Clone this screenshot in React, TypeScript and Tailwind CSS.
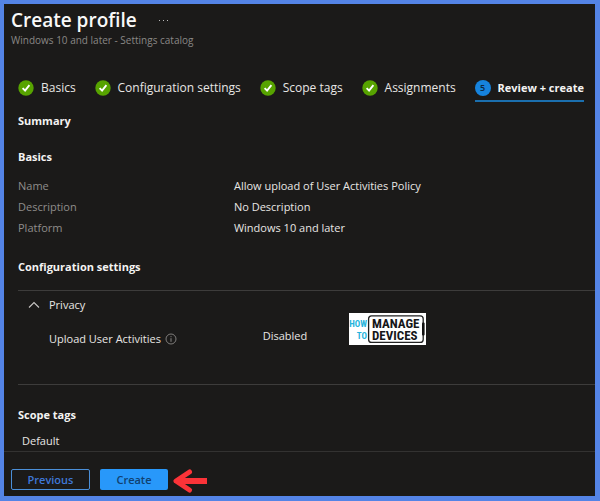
import { useState } from "react";
import type { ReactNode } from "react";

const steps = ["Basics", "Configuration settings", "Scope tags", "Assignments"];

const basics = [
  { label: "Name", value: "Allow upload of User Activities Policy" },
  { label: "Description", value: "No Description" },
  { label: "Platform", value: "Windows 10 and later" },
];

function CheckCircle() {
  return (
    <svg viewBox="0 0 16 16" className="size-4 shrink-0" aria-hidden="true">
      <circle cx="8" cy="8" r="7.7" fill="#57a300" />
      <path d="M4.6 8.1 7.1 10.6 11.4 5.2" fill="none" stroke="#fff" strokeWidth="1.9" />
    </svg>
  );
}

function InfoIcon() {
  return (
    <svg viewBox="0 0 12 12" className="size-3" aria-hidden="true">
      <circle cx="6" cy="6" r="5" fill="none" stroke="#8a8886" strokeWidth="0.9" />
      <path d="M6 5.2V8.8M6 3.2V4.2" stroke="#8a8886" strokeWidth="1" />
    </svg>
  );
}

function ArrowLeft() {
  return (
    <svg viewBox="0 0 36 24" className="h-6 w-9" aria-hidden="true">
      <path d="M35 12H6" stroke="#fb3338" strokeWidth="6" />
      <path d="M17.5 3 4 12 17.5 21" fill="none" stroke="#fb3338" strokeWidth="5" strokeLinecap="round" strokeLinejoin="round" />
    </svg>
  );
}

function Logo() {
  return (
    <svg viewBox="0 0 77 32" className="mb-0.5 h-8 w-[77px]" role="img" aria-label="How to manage devices">
      <rect width="77" height="32" fill="#fff" />
      <g fontFamily="'Roboto Condensed', Roboto, sans-serif" fontWeight="700">
        <g fill="#25b4dc" fontSize="9" textAnchor="end">
          <text x="18" y="14">HOW</text>
          <text x="18" y="26">TO</text>
        </g>
        <g fill="#16171a" fontSize="13">
          <text x="23" y="15">MANAGE</text>
          <text x="23" y="27">DEVICES</text>
        </g>
      </g>
      <rect x="19.6" y="2.8" width="54.6" height="26.6" rx="3" fill="none" stroke="#222" strokeWidth="1.3" />
      <rect x="73" y="9.5" width="2.6" height="13" rx="1" fill="#111" />
    </svg>
  );
}

function Heading({ children }: { children: ReactNode }) {
  return <h2 className="leading-4 font-bold text-[#f4f3f2]">{children}</h2>;
}

export default function App() {
  const [open, setOpen] = useState(true);

  return (
    <div className="flex min-h-screen flex-col border-4 border-r-5 border-b-5 border-[#5484e6] bg-[#1b1a19] font-['Open_Sans','Noto_Sans',sans-serif] text-[11px] leading-4 text-[#e8e6e4]">
      <header className="px-[7px] pt-1">
        <div className="flex items-center gap-[18px]">
          <h1 className="text-[19px] leading-6 font-semibold text-[#f8f8f8]">Create profile</h1>
          <button type="button" aria-label="More actions" className="flex gap-[3px] p-1">
            <span className="size-px bg-[#bbb]" />
            <span className="size-px bg-[#bbb]" />
            <span className="size-px bg-[#bbb]" />
          </button>
        </div>
        <p className="text-[10px] leading-4 text-[#8a8886]">Windows 10 and later - Settings catalog</p>
      </header>

      <main className="flex-1 px-3.5 pt-[25px]">
        <nav aria-label="Wizard steps" className="-mr-[3px]">
          <ol className="flex items-start justify-between">
            {steps.map((step) => (
              <li key={step}>
                <button type="button" className="flex h-[29px] items-center gap-[7px] border-b-2 border-transparent pt-0.5 text-xs whitespace-nowrap">
                  <CheckCircle />
                  {step}
                </button>
              </li>
            ))}
            <li>
              <button
                type="button"
                aria-current="step"
                className="flex h-[29px] items-center gap-[7px] border-b-2 border-[#1b6fae] pt-0.5 font-bold whitespace-nowrap text-[#f4f3f2]"
              >
                <span className="flex size-4 items-center justify-center rounded-full bg-[#1683dd] text-[9px] leading-3 font-semibold text-[#0c2740]">5</span>
                Review + create
              </button>
            </li>
          </ol>
        </nav>

        <div className="pt-[11px]">
          <Heading>Summary</Heading>
        </div>

        <section className="pt-5">
          <Heading>Basics</Heading>
          <table className="mt-2.5 w-full">
            <tbody>
              {basics.map((row) => (
                <tr key={row.label} className="h-[21px]">
                  <th scope="row" className="w-[38%] p-0 text-left font-normal text-[#8f8d8b]">{row.label}</th>
                  <td className="p-0 pl-0.5">{row.value}</td>
                </tr>
              ))}
            </tbody>
          </table>
        </section>

        <section className="pt-[21px]">
          <Heading>Configuration settings</Heading>
          <div className="-mr-3.5 mt-[15px] h-[95px] border-y border-[#3d3c3b] pt-1.5">
            <button type="button" aria-expanded={open} onClick={() => setOpen(!open)} className="flex items-center gap-[9px] pl-2.5">
              <svg viewBox="0 0 12 8" className={open ? "h-2 w-3" : "h-2 w-3 rotate-180"} aria-hidden="true">
                <path d="M1 6.5 6 1.5 11 6.5" fill="none" stroke="#c8c6c4" strokeWidth="1.1" />
              </svg>
              Privacy
            </button>
            {open && (
              <div className="flex items-end pl-1">
                <div className="flex w-[42%] items-center gap-1 pl-[27px]">
                  Upload User Activities
                  <button type="button" aria-label="About Upload User Activities">
                    <InfoIcon />
                  </button>
                </div>
                <span className="w-[15%] pb-[3px]">Disabled</span>
                <Logo />
              </div>
            )}
          </div>
        </section>

        <section className="pt-[22px]">
          <Heading>Scope tags</Heading>
          <p className="pt-2.5 pl-1">Default</p>
        </section>
      </main>

      <footer className="flex items-start border-t border-[#333231] px-[7px] pt-[17px] pb-[3px]">
        <button type="button" className="h-[21px] w-[79px] rounded-xs border border-[#4b8fd8] font-semibold text-[#3f78d8]">
          Previous
        </button>
        <button type="button" className="mr-1 ml-2.5 h-[21px] w-[68px] rounded-xs bg-[#2898fa] font-semibold text-[#10406f]">
          Create
        </button>
        <ArrowLeft />
      </footer>
    </div>
  );
}
